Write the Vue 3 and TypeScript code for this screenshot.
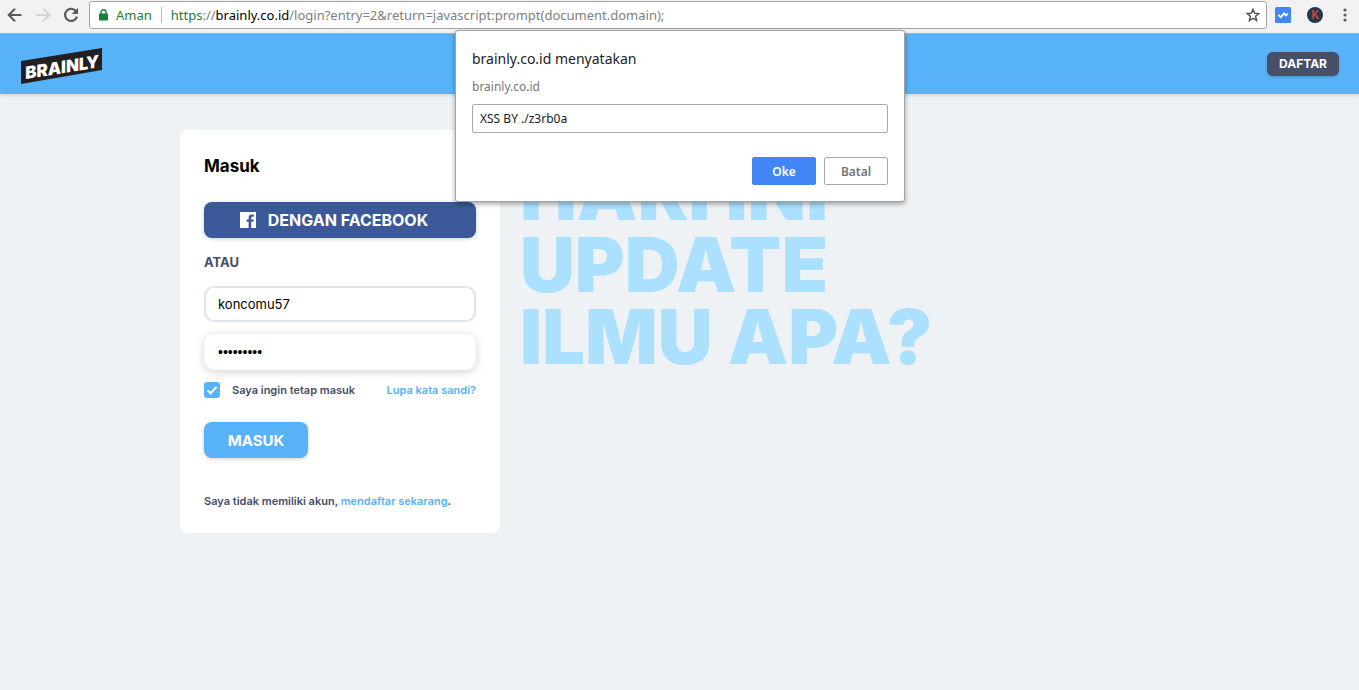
<script setup lang="ts">
import { ref } from 'vue'

const username = ref('koncomu57')
const password = ref('rahasia57')
const remember = ref(true)
const promptValue = ref('XSS BY ./z3rb0a')
const headline: string[] = ['HARI INI', 'UPDATE', 'ILMU APA?']
</script>

<template>
  <div class="window">
    <div class="toolbar">
      <button class="tool" type="button" aria-label="Kembali">
        <svg width="16" height="16" viewBox="0 0 16 16" fill="none" stroke="#5a5a5e" stroke-width="2">
          <path d="M14.5 8H2M8 1.700L1.700 8L8 14.300" />
        </svg>
      </button>
      <button class="tool" type="button" aria-label="Maju">
        <svg width="16" height="16" viewBox="0 0 16 16" fill="none" stroke="#d3d3d3" stroke-width="2">
          <path d="M1.500 8H14M8 1.700L14.300 8L8 14.300" />
        </svg>
      </button>
      <button class="tool" type="button" aria-label="Muat ulang">
        <svg width="16" height="16" viewBox="0 0 16 16" fill="none">
          <path d="M13.200 4.400A6.100 6.100 0 1 0 14 9.600" stroke="#5a5a5e" stroke-width="2.200" />
          <path d="M15 0.800V7H8.800Z" fill="#5a5a5e" />
        </svg>
      </button>
      <div class="omnibox">
        <svg width="9" height="12" viewBox="0 0 9 12">
          <path d="M2 5V3.200a2.500 2.500 0 0 1 5 0V5" fill="none" stroke="#188038" stroke-width="1.400" />
          <rect x="0" y="4.500" width="9" height="7" rx="0.800" fill="#188038" />
        </svg>
        <span class="secure">Aman</span>
        <span class="divider"></span>
        <span class="url"><span class="scheme">https</span>://<span class="host">brainly.co.id</span>/login?entry=2&amp;return=javascript:prompt(document.domain);</span>
        <button class="star" type="button" aria-label="Tandai halaman ini">
          <svg width="14" height="14" viewBox="0 0 14 14" fill="none" stroke="#4a4a4e" stroke-width="1.400">
            <path d="M7 1.400L8.600 5.200L12.800 5.600L9.600 8.300L10.600 12.400L7 10.200L3.400 12.400L4.400 8.300L1.200 5.600L5.400 5.200Z" />
          </svg>
        </button>
      </div>
      <div class="extensions">
        <button class="tool" type="button" aria-label="Ekstensi">
          <svg width="16" height="16" viewBox="0 0 16 16">
            <rect width="16" height="16" rx="1.500" fill="#4285f4" />
            <path d="M3.200 7.800L5.800 10.200L9 6.400L10.800 8.600L13 6.600" fill="none" stroke="#fff" stroke-width="1.700" />
          </svg>
        </button>
        <button class="tool profile" type="button">K</button>
        <button class="tool" type="button" aria-label="Menu">
          <svg width="4" height="14" viewBox="0 0 4 14" fill="#5a5a5e">
            <circle cx="2" cy="2" r="1.600" />
            <circle cx="2" cy="7" r="1.600" />
            <circle cx="2" cy="12" r="1.600" />
          </svg>
        </button>
      </div>
    </div>

    <header class="header">
      <a class="logo" href="#" aria-label="Brainly">
        <svg width="81" height="36" viewBox="0 0 81 36">
          <polygon points="0,13 81,0 81,22 0,36" fill="#231f20" />
          <text class="logo-text" x="5" y="31" transform="rotate(-9 5 31)">BRAINLY</text>
        </svg>
      </a>
      <a class="register" href="#">DAFTAR</a>
    </header>

    <main class="content">
      <form class="card" @submit.prevent>
        <h1 class="title">Masuk</h1>
        <button class="button facebook" type="button">
          <svg width="16" height="16" viewBox="0 0 16 16">
            <path fill="#fff" d="M0 0H16V16H11.200V9.800H13.400L13.700 7.400H11.200V6C11.200 5.200 11.500 4.800 12.500 4.800H13.800V2.500H11.800C9.700 2.500 8.600 3.700 8.600 5.700V7.400H6.600V9.800H8.600V16H0Z" />
          </svg>
          <span>DENGAN FACEBOOK</span>
        </button>
        <p class="or">ATAU</p>
        <input v-model="username" class="field" type="text" aria-label="Nama pengguna" />
        <input v-model="password" class="field active" type="password" aria-label="Kata sandi" />
        <div class="options">
          <label class="remember">
            <input v-model="remember" class="check" type="checkbox" />
            <svg class="tick" width="16" height="16" viewBox="0 0 16 16" fill="none" stroke="#fff" stroke-width="2">
              <path d="M3.500 8.200L6.600 11.200L12.500 4.800" />
            </svg>
            <span>Saya ingin tetap masuk</span>
          </label>
          <a href="#">Lupa kata sandi?</a>
        </div>
        <button class="button submit" type="submit">MASUK</button>
        <p class="signup">Saya tidak memiliki akun, <a href="#">mendaftar sekarang</a>.</p>
      </form>
      <p class="headline">
        <span v-for="line in headline" :key="line">{{ line }}</span>
      </p>
    </main>

    <div class="overlay">
      <form class="dialog" role="dialog" aria-labelledby="dialog-title" @submit.prevent>
        <h2 id="dialog-title" class="dialog-title">brainly.co.id menyatakan</h2>
        <label class="dialog-label" for="dialog-input">brainly.co.id</label>
        <input id="dialog-input" v-model="promptValue" class="dialog-input" type="text" />
        <div class="dialog-actions">
          <button class="dialog-button primary" type="submit">Oke</button>
          <button class="dialog-button" type="button">Batal</button>
        </div>
      </form>
    </div>
  </div>
</template>

<style>
body {
  margin: 0;
  background: #eef2f5;
}
</style>

<style scoped>
* {
  box-sizing: border-box;
}

.window {
  position: relative;
  min-height: 100vh;
  background: #eef2f5;
  font-family: Inter, sans-serif;
}

a {
  color: #57b2f8;
  text-decoration: none;
}

button {
  margin: 0;
  padding: 0;
  border: 0;
  background: none;
  font-family: inherit;
}

.toolbar {
  display: flex;
  align-items: center;
  gap: 12px;
  height: 34px;
  padding: 0 12px 4px 7px;
  border-bottom: 1px solid #b6b4b6;
  background: #f2f2f2;
  font-family: "Noto Sans", sans-serif;
}

.tool {
  display: flex;
  align-items: center;
  justify-content: center;
}

.omnibox {
  display: flex;
  flex: 1;
  align-items: center;
  height: 28px;
  margin-top: 1px;
  margin-left: -2px;
  padding: 0 6px 0 9px;
  border: 1px solid #a5a5a5;
  border-radius: 3px;
  background: #fff;
  color: #808080;
  font-size: 13px;
  white-space: nowrap;
}

.secure {
  margin-left: 8px;
  color: #188038;
}

.divider {
  width: 1px;
  height: 16px;
  margin: 0 9px;
  background: #b8b8b8;
}

.scheme {
  color: #188038;
}

.host {
  color: #000;
}

.star {
  display: flex;
  margin-left: auto;
}

.extensions {
  display: flex;
  align-items: center;
  gap: 16px;
  margin-left: -4px;
}

.profile {
  width: 16px;
  height: 16px;
  border-radius: 50%;
  background: #263746;
  color: #e5403a;
  font-family: Roboto, sans-serif;
  font-size: 12px;
  font-weight: 500;
  line-height: 16px;
}

.extensions .tool:last-child {
  margin-left: 4px;
}

.header {
  display: flex;
  align-items: center;
  justify-content: space-between;
  height: 60px;
  padding: 0 20px 0 21px;
  background: #57b2f8;
  box-shadow: 0 1px 4px rgba(0, 0, 0, 0.16);
}

.logo {
  display: flex;
  margin-top: 4px;
}

.logo-text {
  fill: #fff;
  font-size: 17px;
  font-style: italic;
  font-weight: 900;
}

.register {
  padding: 0 12px;
  border-radius: 6px;
  background: #464e68;
  box-shadow: 0 1px 3px rgba(0, 0, 0, 0.2);
  color: #fff;
  font-size: 12px;
  font-weight: 700;
  line-height: 24px;
}

.content {
  display: flex;
  align-items: flex-start;
  gap: 20px;
  max-width: 999px;
  margin: 0 auto;
  padding: 36px 0;
}

.card {
  width: 320px;
  padding: 24px;
  border-radius: 8px;
  background: #fff;
  color: #464e68;
}

.title {
  margin: 0 0 24px;
  color: #000;
  font-size: 17px;
  font-weight: 700;
  line-height: 24px;
}

.button {
  display: flex;
  align-items: center;
  justify-content: center;
  height: 36px;
  border-radius: 8px;
  box-shadow: 0 1px 4px rgba(0, 0, 0, 0.2);
  color: #fff;
  font-size: 16px;
  font-weight: 700;
}

.facebook {
  gap: 12px;
  width: 100%;
  padding-right: 12px;
  background: #3b5998;
}

.or {
  margin: 12px 0;
  font-size: 13px;
  font-weight: 700;
  line-height: 24px;
}

.field {
  display: block;
  width: 100%;
  height: 36px;
  padding: 0 12px;
  border: 2px solid #dfe6eb;
  border-radius: 10px;
  outline: 0;
  background: #fff;
  color: #000;
  font-family: Inter, sans-serif;
  font-size: 13px;
}

.active {
  margin-top: 12px;
  border-color: #fff;
  box-shadow: 0 2px 10px rgba(0, 0, 0, 0.18);
  font-family: "Liberation Sans", sans-serif;
  font-size: 14px;
}

.options {
  display: flex;
  align-items: center;
  justify-content: space-between;
  height: 24px;
  margin: 8px 0 20px;
  font-size: 11px;
  font-weight: 600;
}

.remember {
  display: flex;
  position: relative;
  align-items: center;
  gap: 12px;
}

.check {
  width: 16px;
  height: 16px;
  margin: 0;
  border-radius: 3px;
  background: #57b2f8;
  appearance: none;
}

.tick {
  position: absolute;
  left: 0;
  pointer-events: none;
}

.submit {
  width: 104px;
  background: #57b2f8;
  font-size: 15px;
}

.signup {
  margin: 35px 0 0;
  font-size: 11px;
  font-weight: 600;
  line-height: 16px;
}

.headline {
  display: flex;
  flex-direction: column;
  margin: 26px 0 0;
  color: #abe0ff;
  font-size: 76px;
  font-weight: 900;
  line-height: 72px;
  white-space: nowrap;
}

.overlay {
  display: flex;
  position: absolute;
  top: 30px;
  right: 0;
  left: 1px;
  justify-content: center;
}

.dialog {
  width: 450px;
  padding: 16px;
  border: 1px solid #a3a3a3;
  border-radius: 3px;
  background: #fff;
  box-shadow: 0 2px 5px rgba(0, 0, 0, 0.35);
  font-family: "Noto Sans", sans-serif;
}

.dialog-title {
  margin: 0;
  color: #222;
  font-size: 14px;
  font-weight: 400;
  line-height: 24px;
}

.dialog-label {
  display: block;
  margin: 6px 0 7px;
  color: #777;
  font-size: 12px;
  line-height: 20px;
}

.dialog-input {
  display: block;
  width: 100%;
  height: 29px;
  padding: 0 7px;
  border: 1px solid #aaa;
  border-radius: 2px;
  outline: 0;
  color: #222;
  font-family: inherit;
  font-size: 12px;
}

.dialog-actions {
  display: flex;
  justify-content: flex-end;
  gap: 8px;
  margin-top: 24px;
}

.dialog-button {
  width: 64px;
  height: 28px;
  border: 1px solid #aaa;
  border-radius: 2px;
  color: #757575;
  font-size: 12px;
  font-weight: 600;
}

.primary {
  border-color: #4285f4;
  background: #4285f4;
  color: #fff;
}
</style>
